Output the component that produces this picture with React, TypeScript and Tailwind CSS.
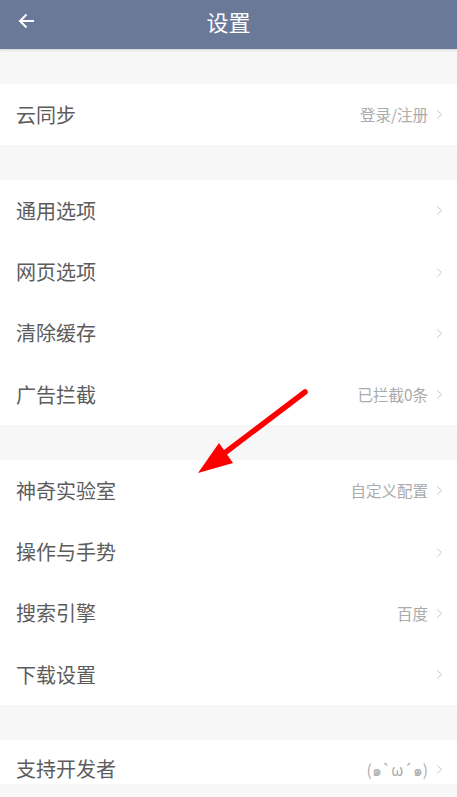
import { ChevronRight } from "lucide-react";

type Item = { label: string; value?: string };

const groups: Item[][] = [
  [{ label: "云同步", value: "登录/注册" }],
  [
    { label: "通用选项" },
    { label: "网页选项" },
    { label: "清除缓存" },
    { label: "广告拦截", value: "已拦截0条" },
  ],
  [
    { label: "神奇实验室", value: "自定义配置" },
    { label: "操作与手势" },
    { label: "搜索引擎", value: "百度" },
    { label: "下载设置" },
  ],
];

function Row({ label, value, short }: Item & { short?: boolean }) {
  return (
    <div
      className={`flex items-center justify-between bg-white pl-4 pr-[10px] ${
        short ? "h-[44px] pt-[14px]" : "h-[61.25px]"
      }`}
    >
      <span className="text-[20px] text-[#5c5c5c]">{label}</span>
      <div className="flex items-center gap-[4px]">
        {value && <span className="text-[15.5px] text-[#ababab]">{value}</span>}
        <ChevronRight size={15} strokeWidth={1.6} className="text-[#c3c6dc]" />
      </div>
    </div>
  );
}

export default function App() {
  return (
    <div
      className="relative h-[797px] w-[457px] overflow-hidden bg-[#f7f7f7]"
      style={{ fontFamily: '"Noto Sans CJK SC", "Noto Sans", sans-serif' }}
    >
      <header className="relative flex h-[49px] items-center justify-center bg-[#6b7999] pb-[6px] shadow-[0_1px_3px_rgba(0,0,0,0.15)]">
        <svg
          className="absolute left-[18px] top-[12px]"
          width="18"
          height="18"
          viewBox="0 0 18 18"
          fill="none"
          stroke="white"
          strokeWidth="2"
        >
          <path d="M16 9H2M8.5 2.5L2 9l6.5 6.5" />
        </svg>
        <h1 className="text-[22px] text-white">设置</h1>
      </header>

      <div className="flex flex-col gap-[35px] pt-[35px]">
        {groups.map((g, i) => (
          <div key={i} className="flex flex-col">
            {g.map((it) => (
              <Row key={it.label} {...it} />
            ))}
          </div>
        ))}
        <Row label="支持开发者" value="(๑`ω´๑)" short />
      </div>

      {/* red arrow pointing at the lab entry */}
      <svg className="pointer-events-none absolute left-0 top-0" width="457" height="797">
        <line x1="305" y1="392" x2="218" y2="458" stroke="#ff0000" strokeWidth="5.5" strokeLinecap="round" />
        <polygon points="198,473 219,443 233,463" fill="#ff0000" />
      </svg>
    </div>
  );
}
